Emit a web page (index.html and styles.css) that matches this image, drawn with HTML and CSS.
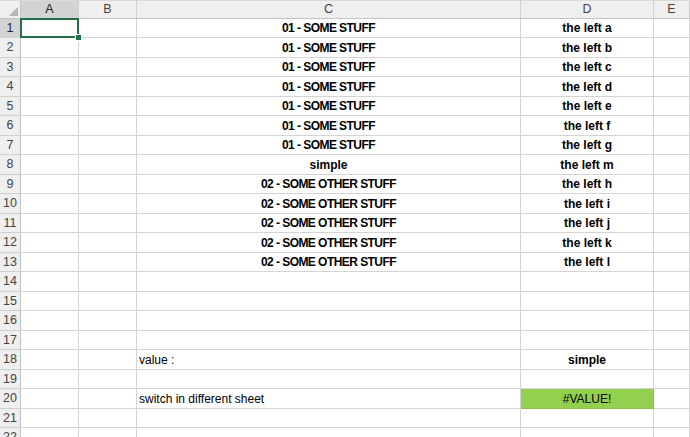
FILE: index.html
```html
<!DOCTYPE html>
<html>
<head>
<meta charset="utf-8">
<link rel="stylesheet" href="styles.css">
</head>
<body>
<div class="sheet">
  <div class="corner hd"><span class="tri"></span></div>
  <div class="ch hd sel">A</div>
  <div class="ch hd">B</div>
  <div class="ch hd">C</div>
  <div class="ch hd">D</div>
  <div class="ch hd">E</div>

  <div class="rh hd sel">1</div><div class="c a1"><span class="handle"></span></div><div class="c"></div><div class="c ctr b caps">01 - SOME STUFF</div><div class="c ctr b">the left a</div><div class="c"></div>
  <div class="rh hd">2</div><div class="c"></div><div class="c"></div><div class="c ctr b caps">01 - SOME STUFF</div><div class="c ctr b">the left b</div><div class="c"></div>
  <div class="rh hd">3</div><div class="c"></div><div class="c"></div><div class="c ctr b caps">01 - SOME STUFF</div><div class="c ctr b">the left c</div><div class="c"></div>
  <div class="rh hd">4</div><div class="c"></div><div class="c"></div><div class="c ctr b caps">01 - SOME STUFF</div><div class="c ctr b">the left d</div><div class="c"></div>
  <div class="rh hd">5</div><div class="c"></div><div class="c"></div><div class="c ctr b caps">01 - SOME STUFF</div><div class="c ctr b">the left e</div><div class="c"></div>
  <div class="rh hd">6</div><div class="c"></div><div class="c"></div><div class="c ctr b caps">01 - SOME STUFF</div><div class="c ctr b">the left f</div><div class="c"></div>
  <div class="rh hd">7</div><div class="c"></div><div class="c"></div><div class="c ctr b caps">01 - SOME STUFF</div><div class="c ctr b">the left g</div><div class="c"></div>
  <div class="rh hd">8</div><div class="c"></div><div class="c"></div><div class="c ctr b">simple</div><div class="c ctr b">the left m</div><div class="c"></div>
  <div class="rh hd">9</div><div class="c"></div><div class="c"></div><div class="c ctr b caps">02 - SOME OTHER STUFF</div><div class="c ctr b">the left h</div><div class="c"></div>
  <div class="rh hd">10</div><div class="c"></div><div class="c"></div><div class="c ctr b caps">02 - SOME OTHER STUFF</div><div class="c ctr b">the left i</div><div class="c"></div>
  <div class="rh hd">11</div><div class="c"></div><div class="c"></div><div class="c ctr b caps">02 - SOME OTHER STUFF</div><div class="c ctr b">the left j</div><div class="c"></div>
  <div class="rh hd">12</div><div class="c"></div><div class="c"></div><div class="c ctr b caps">02 - SOME OTHER STUFF</div><div class="c ctr b">the left k</div><div class="c"></div>
  <div class="rh hd">13</div><div class="c"></div><div class="c"></div><div class="c ctr b caps">02 - SOME OTHER STUFF</div><div class="c ctr b">the left l</div><div class="c"></div>
  <div class="rh hd">14</div><div class="c"></div><div class="c"></div><div class="c"></div><div class="c"></div><div class="c"></div>
  <div class="rh hd">15</div><div class="c"></div><div class="c"></div><div class="c"></div><div class="c"></div><div class="c"></div>
  <div class="rh hd">16</div><div class="c"></div><div class="c"></div><div class="c"></div><div class="c"></div><div class="c"></div>
  <div class="rh hd">17</div><div class="c"></div><div class="c"></div><div class="c"></div><div class="c"></div><div class="c"></div>
  <div class="rh hd">18</div><div class="c"></div><div class="c"></div><div class="c">value :</div><div class="c ctr b">simple</div><div class="c"></div>
  <div class="rh hd">19</div><div class="c"></div><div class="c"></div><div class="c"></div><div class="c"></div><div class="c"></div>
  <div class="rh hd">20</div><div class="c"></div><div class="c"></div><div class="c">switch in different sheet</div><div class="c ctr green">#VALUE!</div><div class="c"></div>
  <div class="rh hd">21</div><div class="c"></div><div class="c"></div><div class="c"></div><div class="c"></div><div class="c"></div>
  <div class="rh hd">22</div><div class="c"></div><div class="c"></div><div class="c"></div><div class="c"></div><div class="c"></div>
</div>
</body>
</html>
```
FILE: styles.css
```css
html, body {
  margin: 0;
  padding: 0;
  background: #ffffff;
  overflow: hidden;
}

.sheet {
  display: grid;
  grid-template-columns: 21px 58px 58px 384px 133px 1fr;
  grid-template-rows: 18.5px repeat(22, 19.5px);
  width: 690px;
  height: 437px;
  overflow: hidden;
  font-family: "Liberation Sans", Arial, sans-serif;
  font-size: 12px;
  color: #000;
}

.hd {
  background: #efefef;
  color: #444;
  border-right: 1px solid #d0d0d0;
  border-bottom: 1px solid #d0d0d0;
  box-sizing: border-box;
  display: flex;
  align-items: center;
  justify-content: center;
  font-size: 12.5px;
}

.ch {
  border-top: 1px solid #dadada;
  border-bottom-color: #c2c2c2;
}

.rh {
  border-right-color: #c2c2c2;
}

.hd.sel {
  background: #d3d3d3;
  color: #222;
}

.corner {
  position: relative;
  border-top: 1px solid #dadada;
  border-bottom-color: #c2c2c2;
  border-right-color: #c2c2c2;
}

.tri {
  position: absolute;
  right: 2px;
  bottom: 2px;
  width: 0;
  height: 0;
  border-left: 9px solid transparent;
  border-bottom: 9px solid #b5b5b5;
}

.c {
  border-right: 1px solid #d4d4d4;
  border-bottom: 1px solid #d4d4d4;
  box-sizing: border-box;
  display: flex;
  align-items: center;
  padding: 1px 2px 0;
  white-space: nowrap;
  overflow: visible;
}

.ctr {
  justify-content: center;
}

.b {
  font-weight: bold;
}

.caps {
  letter-spacing: -0.55px;
}

.green {
  background: #92d050;
  border-color: #87c646;
}

.a1 {
  position: relative;
  overflow: visible;
}

.a1::before {
  content: "";
  position: absolute;
  left: -1px;
  top: -1px;
  right: -1px;
  bottom: -1px;
  border: 2px solid #217346;
  pointer-events: none;
}

.handle {
  position: absolute;
  right: -4px;
  bottom: -4px;
  width: 5px;
  height: 5px;
  background: #217346;
  border: 1px solid #ffffff;
  z-index: 2;
}
```
